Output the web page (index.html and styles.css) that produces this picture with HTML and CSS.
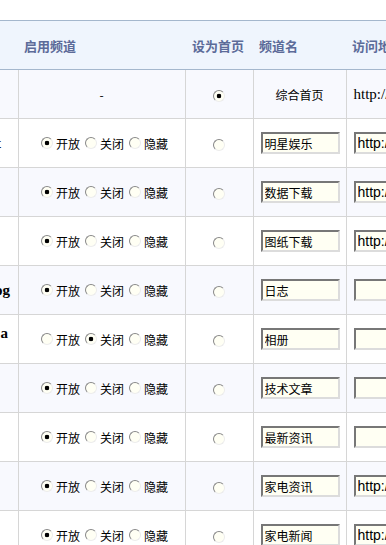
FILE: index.html
```html
<!DOCTYPE html>
<html lang="zh-CN">
<head>
  <meta charset="UTF-8" />
  <title>频道管理</title>
  <link rel="stylesheet" href="styles.css">
</head>
<body>
  <table class="channels">
    <colgroup>
      <col class="c-name">
      <col class="c-state">
      <col class="c-home">
      <col class="c-title">
      <col class="c-url">
    </colgroup>
    <thead>
      <tr>
        <th></th>
        <th>启用频道</th>
        <th>设为首页</th>
        <th>频道名</th>
        <th>访问地址</th>
      </tr>
    </thead>
    <tbody>
      <tr>
        <td class="name"></td>
        <td class="state">-</td>
        <td class="home"><input type="radio" name="home" checked></td>
        <td class="title center">综合首页</td>
        <td class="url plain">http://www.example.com/</td>
      </tr>
      <tr>
        <td class="name"><div class="clip far">Star Ent</div></td>
        <td class="state">
          <div class="opts">
            <label><input type="radio" name="s2" checked>开放</label>
            <label><input type="radio" name="s2">关闭</label>
            <label><input type="radio" name="s2">隐藏</label>
          </div>
        </td>
        <td class="home"><input type="radio" name="home"></td>
        <td class="title"><input class="box" type="text" value="明星娱乐"></td>
        <td class="url"><input class="box" type="text" value="http://ent.example.com/"></td>
      </tr>
      <tr>
        <td class="name"></td>
        <td class="state">
          <div class="opts">
            <label><input type="radio" name="s3" checked>开放</label>
            <label><input type="radio" name="s3">关闭</label>
            <label><input type="radio" name="s3">隐藏</label>
          </div>
        </td>
        <td class="home"><input type="radio" name="home"></td>
        <td class="title"><input class="box" type="text" value="数据下载"></td>
        <td class="url"><input class="box" type="text" value="http://down.example.com/"></td>
      </tr>
      <tr>
        <td class="name"></td>
        <td class="state">
          <div class="opts">
            <label><input type="radio" name="s4" checked>开放</label>
            <label><input type="radio" name="s4">关闭</label>
            <label><input type="radio" name="s4">隐藏</label>
          </div>
        </td>
        <td class="home"><input type="radio" name="home"></td>
        <td class="title"><input class="box" type="text" value="图纸下载"></td>
        <td class="url"><input class="box" type="text" value="http://cad.example.com/"></td>
      </tr>
      <tr>
        <td class="name"><div class="clip">Blog</div></td>
        <td class="state">
          <div class="opts">
            <label><input type="radio" name="s5" checked>开放</label>
            <label><input type="radio" name="s5">关闭</label>
            <label><input type="radio" name="s5">隐藏</label>
          </div>
        </td>
        <td class="home"><input type="radio" name="home"></td>
        <td class="title"><input class="box" type="text" value="日志"></td>
        <td class="url"><input class="box" type="text" value=""></td>
      </tr>
      <tr>
        <td class="name top"><div class="clip near">Photo a</div></td>
        <td class="state">
          <div class="opts">
            <label><input type="radio" name="s6">开放</label>
            <label><input type="radio" name="s6" checked>关闭</label>
            <label><input type="radio" name="s6">隐藏</label>
          </div>
        </td>
        <td class="home"><input type="radio" name="home"></td>
        <td class="title"><input class="box" type="text" value="相册"></td>
        <td class="url"><input class="box" type="text" value=""></td>
      </tr>
      <tr>
        <td class="name"></td>
        <td class="state">
          <div class="opts">
            <label><input type="radio" name="s7" checked>开放</label>
            <label><input type="radio" name="s7">关闭</label>
            <label><input type="radio" name="s7">隐藏</label>
          </div>
        </td>
        <td class="home"><input type="radio" name="home"></td>
        <td class="title"><input class="box" type="text" value="技术文章"></td>
        <td class="url"><input class="box" type="text" value=""></td>
      </tr>
      <tr>
        <td class="name"></td>
        <td class="state">
          <div class="opts">
            <label><input type="radio" name="s8" checked>开放</label>
            <label><input type="radio" name="s8">关闭</label>
            <label><input type="radio" name="s8">隐藏</label>
          </div>
        </td>
        <td class="home"><input type="radio" name="home"></td>
        <td class="title"><input class="box" type="text" value="最新资讯"></td>
        <td class="url"><input class="box" type="text" value=""></td>
      </tr>
      <tr>
        <td class="name"></td>
        <td class="state">
          <div class="opts">
            <label><input type="radio" name="s9" checked>开放</label>
            <label><input type="radio" name="s9">关闭</label>
            <label><input type="radio" name="s9">隐藏</label>
          </div>
        </td>
        <td class="home"><input type="radio" name="home"></td>
        <td class="title"><input class="box" type="text" value="家电资讯"></td>
        <td class="url"><input class="box" type="text" value="http://jd.example.com/"></td>
      </tr>
      <tr>
        <td class="name"></td>
        <td class="state">
          <div class="opts">
            <label><input type="radio" name="s10" checked>开放</label>
            <label><input type="radio" name="s10">关闭</label>
            <label><input type="radio" name="s10">隐藏</label>
          </div>
        </td>
        <td class="home"><input type="radio" name="home"></td>
        <td class="title"><input class="box" type="text" value="家电新闻"></td>
        <td class="url"><input class="box" type="text" value="http://news.example.com/"></td>
      </tr>
    </tbody>
  </table>
</body>
</html>
```

FILE: styles.css
```css
html, body {
  margin: 0;
  overflow: hidden;
  background: #fff;
}
body {
  font-family: "Noto Sans CJK SC", "Liberation Serif", serif;
  font-size: 12px;
  color: #000;
}
.channels {
  margin-top: 20px;
  width: 546px;
  table-layout: fixed;
  border-collapse: collapse;
}
.c-name { width: 18px; }
.c-state { width: 167px; }
.c-home { width: 68px; }
.c-title { width: 93px; }
.c-url { width: 200px; }

th {
  height: 48px;
  padding: 0 6px;
  text-align: left;
  font-weight: bold;
  font-size: 13px;
  color: #5c6b99;
  background: #eff5fd;
  border-top: 1px solid #a4b7cd;
  border-bottom: 1px solid #a4b7cd;
  white-space: nowrap;
  overflow: hidden;
}
th:nth-child(3) {
  padding-left: 7px;
}
td {
  height: 48px;
  padding: 0;
  border: 1px solid #d6d6d6;
  border-top: none;
  vertical-align: middle;
  white-space: nowrap;
  overflow: hidden;
}
td:first-child {
  border-left: none;
}
tbody tr:nth-child(odd) td {
  background: #f8f9fe;
}

.name .clip {
  width: 10px;
  padding-right: 8px;
  overflow: hidden;
  direction: rtl;
  font-family: "Liberation Serif", serif;
  font-weight: bold;
  font-size: 15px;
}
.name .clip.far {
  width: 1px;
  padding-right: 17px;
}
.name .clip.near {
  width: 8px;
  padding-right: 10px;
}
.name.top {
  height: 38px;
  vertical-align: top;
  padding-top: 10px;
}
.state, .home, .center {
  text-align: center;
}
.opts {
  display: flex;
  justify-content: center;
  align-items: center;
  gap: 5px;
  padding-left: 6px;
}
.opts label {
  display: flex;
  align-items: center;
}
.title, .url {
  padding-left: 7px;
}
.title.center {
  padding-left: 0;
}
.url.plain {
  font-family: "Liberation Serif", serif;
  font-size: 15px;
}

input[type=radio] {
  appearance: none;
  -webkit-appearance: none;
  width: 12px;
  height: 12px;
  margin: 0 3px 0 0;
  border: 1px solid;
  border-color: #888 #ececec #ececec #888;
  border-radius: 50%;
  background: #fffff4;
}
input[type=radio]:checked {
  background: radial-gradient(circle, #000 0 2px, #fffff4 2.6px);
}
.home input[type=radio] {
  margin: 0;
  vertical-align: -2px;
}

.box {
  box-sizing: border-box;
  width: 79px;
  height: 22px;
  padding: 0 2px;
  border: 2px solid;
  border-color: #777 #dcdcdc #dcdcdc #777;
  background: #fffff3;
  font-family: "Liberation Sans", "Noto Sans CJK SC", sans-serif;
  font-size: 12px;
  color: #000;
  vertical-align: middle;
}
.url .box {
  font-size: 14px;
}
```
